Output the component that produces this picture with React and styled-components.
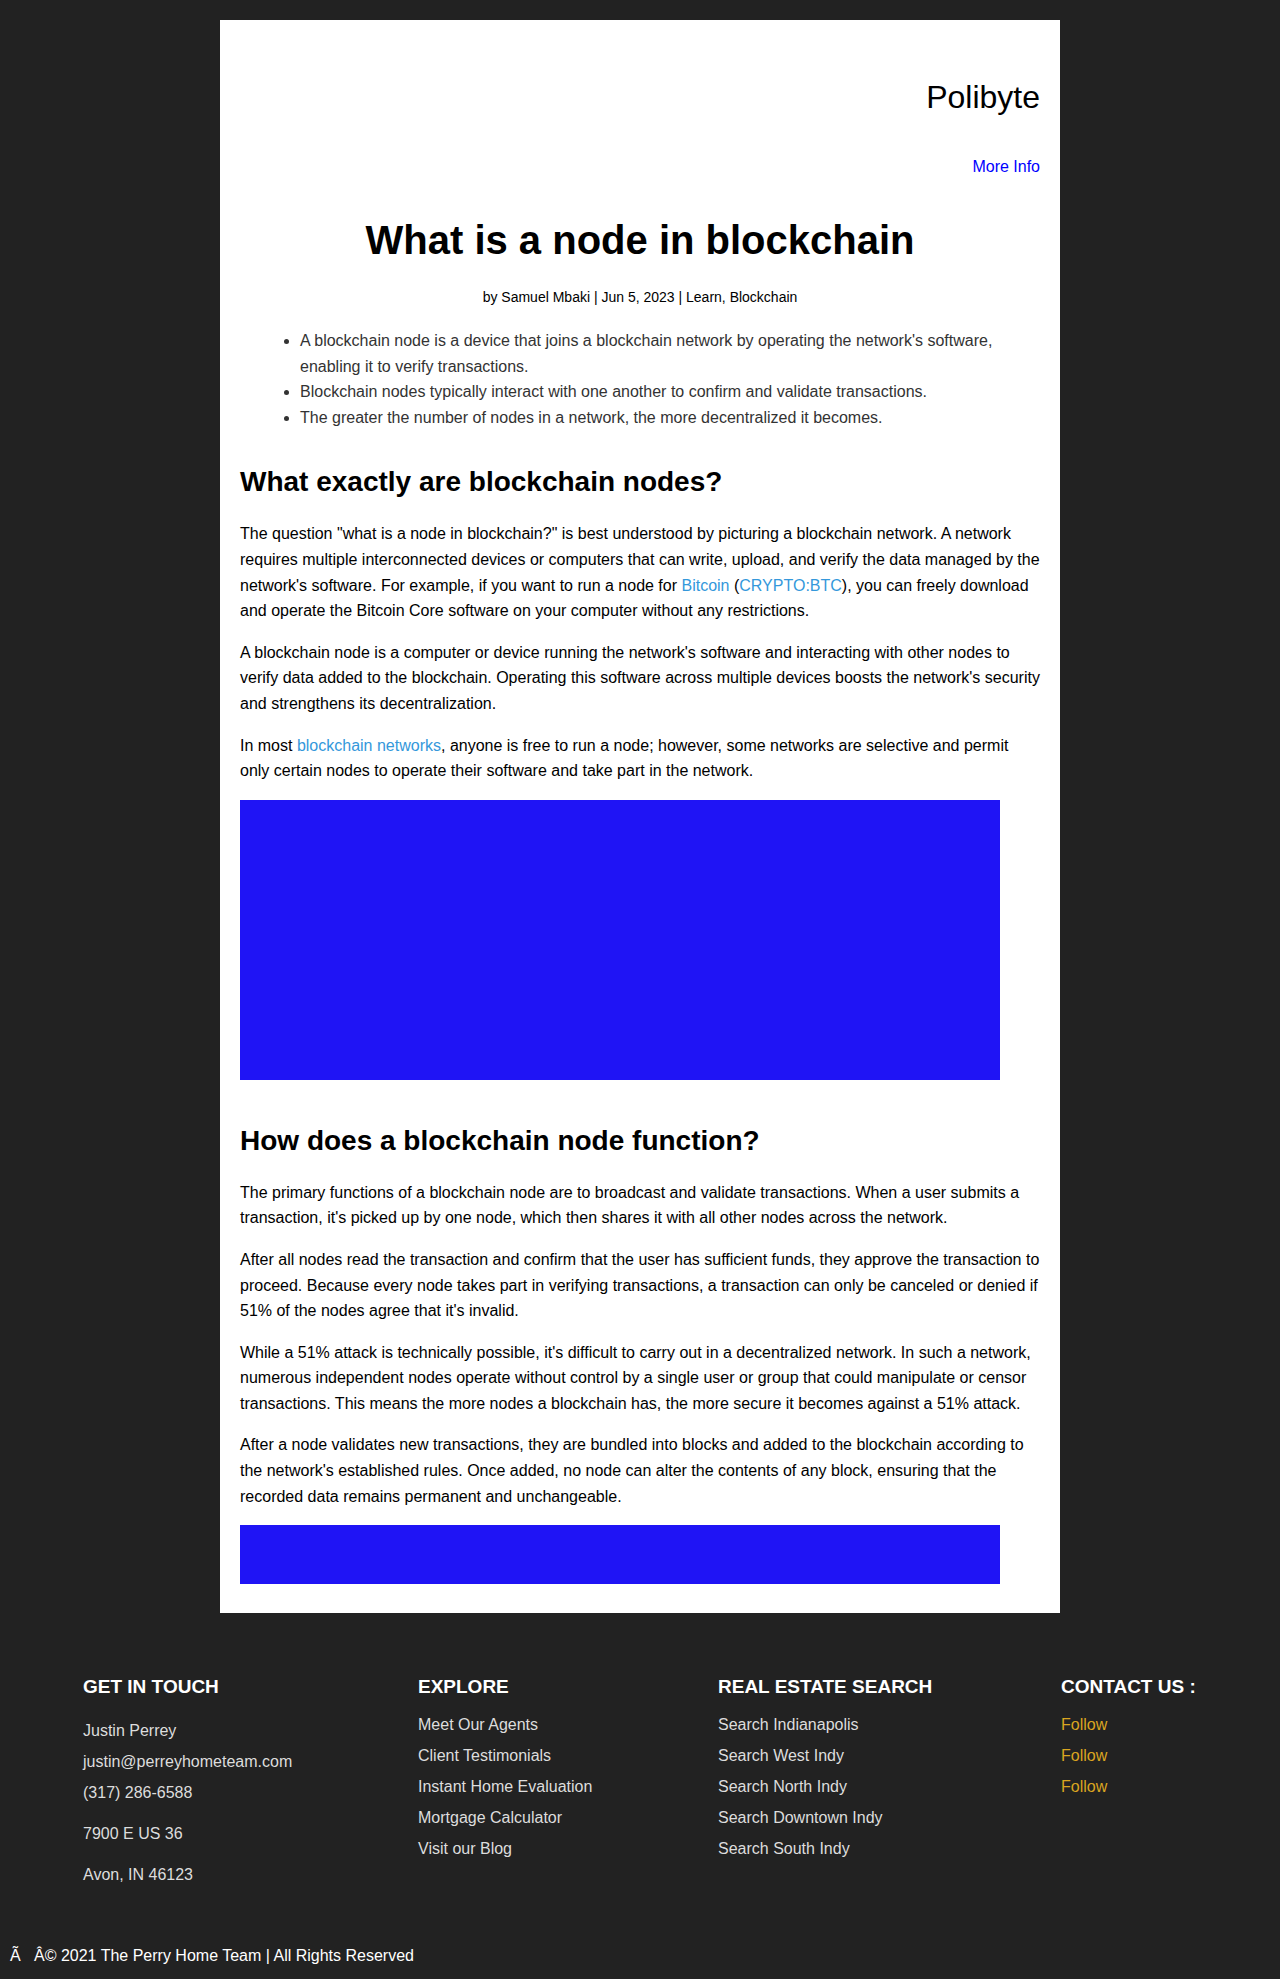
import React from 'react';
import styled, { createGlobalStyle } from 'styled-components';

const GlobalStyle = createGlobalStyle`
  html, body {
    margin: 0;
    padding: 0;
    background: #222222;
    font-family: "Liberation Sans", Arial, sans-serif;
  }
`;

const Page = styled.div`
  background: #222222;
  padding-top: 20px;
  min-height: 1979px;
  box-sizing: border-box;
`;

/* white article card */
const Card = styled.main`
  width: 840px;
  margin: 0 auto;
  background: #ffffff;
  padding: 0 20px 29px;
  box-sizing: border-box;
  color: #000;
`;

const Header = styled.header`
  display: flex;
  flex-direction: column;
  align-items: flex-end;
  padding-top: 59px;
`;

const Brand = styled.div`
  font-size: 32px;
  line-height: 37px;
  color: #000;
`;

const InfoLink = styled.a`
  margin-top: 42px;
  font-size: 16px;
  line-height: 18px;
  color: #0000ff;
  text-decoration: none;
`;

const Title = styled.h1`
  margin: 41px 0 0;
  font-size: 40px;
  line-height: 46px;
  font-weight: 700;
  text-align: center;
`;

const Byline = styled.div`
  margin-top: 26px;
  font-size: 14px;
  line-height: 16px;
  text-align: center;
`;

const Summary = styled.ul`
  margin: 23px 0 0;
  padding-left: 60px;
  color: #333333;
  font-size: 16px;
  line-height: 25.6px;
`;

const SectionTitle = styled.h2`
  margin: ${p => p.$top}px 0 23px;
  font-size: 28px;
  line-height: 32px;
  font-weight: 700;
`;

const Para = styled.p`
  margin: 0 0 16px;
  font-size: 16px;
  line-height: 25.6px;
`;

const Link = styled.a`
  color: #3498db;
  text-decoration: none;
`;

const Picture = styled.div`
  width: 760px;
  height: ${p => p.$h}px;
  background: #1f14f5;
`;

const Footer = styled.footer`
  display: grid;
  grid-template-columns: 335px 300px 343px auto;
  padding: 63px 0 0 83px;
`;

const Column = styled.div`
  display: flex;
  flex-direction: column;
`;

const ColTitle = styled.h4`
  margin: 0;
  font-size: 19px;
  line-height: 21px;
  font-weight: 700;
  color: #ffffff;
  text-transform: uppercase;
`;

const Items = styled.div`
  display: flex;
  flex-direction: column;
  margin-top: ${p => p.$top || 12}px;
  font-size: 16px;
  line-height: 31px;
  color: ${p => p.$gold ? '#daa520' : '#dddddd'};
`;

const Address = styled.div`
  margin-top: 10px;
  font-size: 16px;
  line-height: 31px;
  color: #dddddd;
`;

const Copyright = styled.div`
  margin-top: 57px;
  padding-left: 10px;
  font-size: 16px;
  line-height: 18px;
  color: #ffffff;
`;

export default function App() {
  return (
    <>
      <GlobalStyle />
      <Page>
        <Card>
          <Header>
            <Brand>Polibyte</Brand>
            <InfoLink href="#">More Info</InfoLink>
          </Header>

          <Title>What is a node in blockchain</Title>
          <Byline>by Samuel Mbaki | Jun 5, 2023 | Learn, Blockchain</Byline>

          <Summary>
            <li>A blockchain node is a device that joins a blockchain network by operating the network's software, enabling it to verify transactions.</li>
            <li>Blockchain nodes typically interact with one another to confirm and validate transactions.</li>
            <li>The greater the number of nodes in a network, the more decentralized it becomes.</li>
          </Summary>

          <SectionTitle $top={36}>What exactly are blockchain nodes?</SectionTitle>
          <Para>
            The question "what is a node in blockchain?" is best understood by picturing a blockchain network. A network requires multiple interconnected devices or computers that can write, upload, and verify the data managed by the network's software. For example, if you want to run a node for <Link href="#">Bitcoin</Link> (<Link href="#">CRYPTO:BTC</Link>), you can freely download and operate the Bitcoin Core software on your computer without any restrictions.
          </Para>
          <Para>
            A blockchain node is a computer or device running the network's software and interacting with other nodes to verify data added to the blockchain. Operating this software across multiple devices boosts the network's security and strengthens its decentralization.
          </Para>
          <Para>
            In most <Link href="#">blockchain networks</Link>, anyone is free to run a node; however, some networks are selective and permit only certain nodes to operate their software and take part in the network.
          </Para>
          <Picture $h={280} />

          <SectionTitle $top={45}>How does a blockchain node function?</SectionTitle>
          <Para>
            The primary functions of a blockchain node are to broadcast and validate transactions. When a user submits a transaction, it's picked up by one node, which then shares it with all other nodes across the network.
          </Para>
          <Para>
            After all nodes read the transaction and confirm that the user has sufficient funds, they approve the transaction to proceed. Because every node takes part in verifying transactions, a transaction can only be canceled or denied if 51% of the nodes agree that it's invalid.
          </Para>
          <Para>
            While a 51% attack is technically possible, it's difficult to carry out in a decentralized network. In such a network, numerous independent nodes operate without control by a single user or group that could manipulate or censor transactions. This means the more nodes a blockchain has, the more secure it becomes against a 51% attack.
          </Para>
          <Para>
            After a node validates new transactions, they are bundled into blocks and added to the blockchain according to the network's established rules. Once added, no node can alter the contents of any block, ensuring that the recorded data remains permanent and unchangeable.
          </Para>
          <Picture $h={59} />
        </Card>

        <Footer>
          <Column>
            <ColTitle>Get in touch</ColTitle>
            <Items $top={18}>
              <span>Justin Perrey</span>
              <span>justin@perreyhometeam.com</span>
              <span>(317) 286-6588</span>
            </Items>
            <Address>7900 E US 36</Address>
            <Address>Avon, IN 46123</Address>
          </Column>
          <Column>
            <ColTitle>Explore</ColTitle>
            <Items>
              <span>Meet Our Agents</span>
              <span>Client Testimonials</span>
              <span>Instant Home Evaluation</span>
              <span>Mortgage Calculator</span>
              <span>Visit our Blog</span>
            </Items>
          </Column>
          <Column>
            <ColTitle>Real Estate Search</ColTitle>
            <Items>
              <span>Search Indianapolis</span>
              <span>Search West Indy</span>
              <span>Search North Indy</span>
              <span>Search Downtown Indy</span>
              <span>Search South Indy</span>
            </Items>
          </Column>
          <Column>
            <ColTitle>Contact Us :</ColTitle>
            <Items $gold>
              <span>Follow</span>
              <span>Follow</span>
              <span>Follow</span>
            </Items>
          </Column>
        </Footer>

        <Copyright>Ã{'\u00a0\u00a0\u00a0'}Â© 2021 The Perry Home Team | All Rights Reserved</Copyright>
      </Page>
    </>
  );
}
